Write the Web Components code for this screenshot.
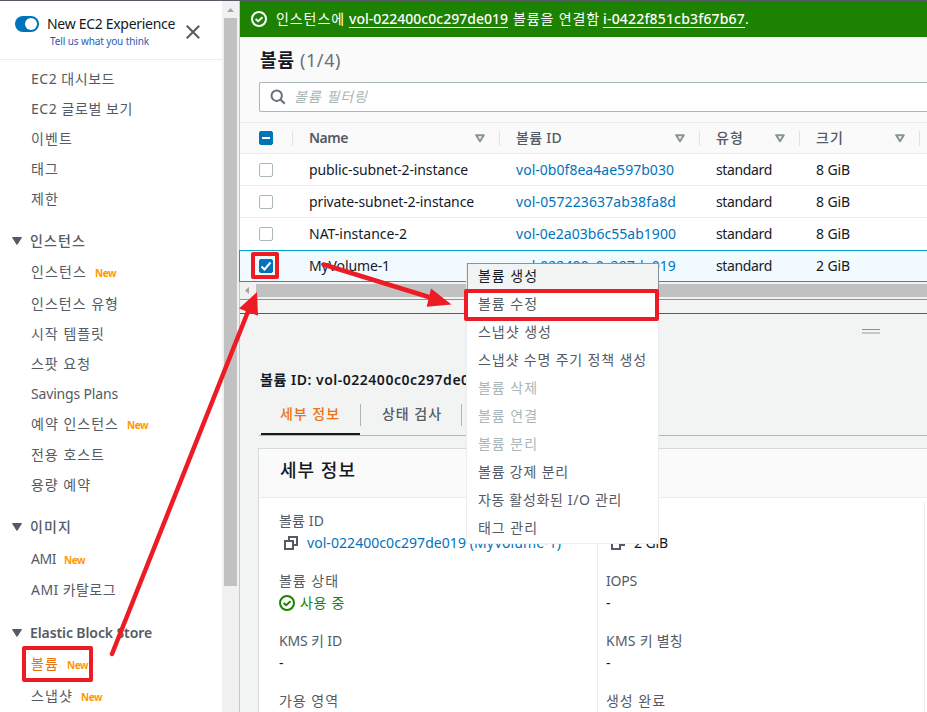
<!DOCTYPE html>
<html lang="ko">
<head>
<meta charset="utf-8">
<title>볼륨 | EC2 Management Console</title>
<style>
	html, body { margin: 0; height: 100%; overflow: hidden; }
	body {
		font: 14px/20px "Noto Sans", "Noto Sans CJK KR", sans-serif;
		color: #16191f;
		background: #f2f3f3;
	}
</style>
</head>
<body>
<ec2-console></ec2-console>
<script>
class BaseElement extends HTMLElement {
	constructor() {
		super();
		this.attachShadow({ mode: "open" });
	}
	connectedCallback() {
		this.shadowRoot.innerHTML = this.render();
	}
	attr(name, fallback = "") {
		return this.getAttribute(name) || fallback;
	}
}

// fit-text: one line of text, tracked to the width in "w"
class FitText extends BaseElement {
	render() {
		return `<style>:host { display: block; white-space: nowrap; flex: none; } span { display: inline-block; height: 20px; line-height: 20px; vertical-align: top; }</style><span><slot></slot></span>`;
	}
	connectedCallback() {
		super.connectedCallback();
		const w = Number(this.getAttribute("w"));
		if (!w) return;
		const span = this.shadowRoot.querySelector("span");
		const natural = span.getBoundingClientRect().width;
		span.style.letterSpacing = (w - natural) / this.textContent.length + "px";
	}
}
customElements.define("fit-text", FitText);

const ICONS = {
	check: `<svg width="16" height="16" viewBox="0 0 16 16" fill="none" stroke="currentColor" stroke-width="2"><circle cx="8" cy="8" r="7"/><path d="M4.6 8l2.5 2.2 4.4-4"/></svg>`,
	close: `<svg width="14" height="14" viewBox="0 0 14 14" fill="none" stroke="currentColor" stroke-width="2"><path d="M.8.8l12.4 12.4M13.2.8L.8 13.2"/></svg>`,
	search: `<svg width="16" height="16" viewBox="0 0 16 16" fill="none" stroke="currentColor" stroke-width="2"><circle cx="6.7" cy="6.7" r="5.2"/><path d="M10.5 10.5l4.2 4.2"/></svg>`,
	filter: `<svg width="10" height="9" viewBox="0 0 10 9" fill="none" stroke="currentColor" stroke-width="2" stroke-linejoin="round"><path d="M1.2 1.2h7.6L5 7.3z"/></svg>`,
	caret: `<svg width="10" height="8" viewBox="0 0 10 8" fill="currentColor" stroke="currentColor" stroke-linejoin="round"><path d="M.5.5h9L5 7.5z"/></svg>`,
	copy: `<svg width="14" height="14" viewBox="0 0 14 14" fill="none" stroke="currentColor" stroke-width="2"><path d="M1 5h8v8H1zM5 4V1h8v8H10"/></svg>`
};
class UiIcon extends BaseElement {
	render() {
		return `<style>:host { display: inline-flex; flex: none; } svg { display: block; }</style>${ICONS[this.attr("name")]}`;
	}
}
customElements.define("ui-icon", UiIcon);

class CheckBox extends BaseElement {
	render() {
		const state = this.attr("state");
		const mark = {
			mixed: `<path d="M2 6h8"/>`,
			on: `<path d="M1.500 6.500l3 3L10.500 2.500"/>`
		}[state] || "";
		return `
			<style>
				:host { display: flex; width: 14px; height: 14px; flex: none; }
				div {
					box-sizing: border-box; width: 14px; height: 14px;
					border: 1px solid ${mark ? "#0073bb" : "#aab7b8"};
					border-radius: 2px; background: ${mark ? "#0073bb" : "#fff"};
				}
				svg { display: block; }
			</style>
			<div><svg width="12" height="12" fill="none" stroke="#fff" stroke-width="2">${mark}</svg></div>
		`;
	}
}
customElements.define("check-box", CheckBox);

class NavItem extends BaseElement {
	render() {
		return `
			<style>
				:host {
					display: flex; align-items: center; height: 30px; padding-left: 31px;
					margin-top: ${this.attr("gap", "0")}px; color: #545b64;
				}
				:host([active]) { color: #ec7211; }
				.new { margin-left: 8px; padding-top: 2px; font-size: 10px; font-weight: 700; color: #ff9900; }
			</style>
			<fit-text w="${this.attr("w")}">${this.attr("label")}</fit-text>
			${this.hasAttribute("new") ? `<fit-text class="new" w="21">New</fit-text>` : ""}
		`;
	}
}
customElements.define("nav-item", NavItem);

class NavHeading extends BaseElement {
	render() {
		return `
			<style>
				:host {
					display: flex; align-items: center; height: 30px; padding-left: 12px; gap: 8px;
					margin-top: ${this.attr("gap", "0")}px; color: #545b64; font-weight: 500;
				}
				:host([latin]) { font-weight: 600; }
			</style>
			<ui-icon name="caret"></ui-icon>
			<fit-text w="${this.attr("w")}">${this.attr("label")}</fit-text>
		`;
	}
}
customElements.define("nav-heading", NavHeading);

class SideNav extends BaseElement {
	render() {
		return `
			<style>
				:host { display: flex; width: 240px; flex: none; background: #fff; overflow: hidden; }
				.panel { width: 222px; flex: none; }
				header {
					box-sizing: border-box; display: flex; height: 59px; padding: 13px 0 0 15px;
					border-bottom: 1px solid #eaeded;
				}
				.toggle {
					box-sizing: border-box; width: 24px; height: 16px; margin-top: 2px; padding: 2px; flex: none;
					border-radius: 8px; background: #0073bb; display: flex; justify-content: flex-end;
				}
				.toggle i { width: 12px; height: 12px; border-radius: 50%; background: #fff; }
				.titles { display: flex; flex-direction: column; margin-left: 8px; }
				.titles .sub { margin: -3px 0 0 3px; font-size: 10px; color: #2a5bb8; }
				header ui-icon { margin: 11px 0 0 11px; color: #545b64; }
				nav { padding-top: 4px; }
				.bar { box-sizing: border-box; flex: none; width: 16px; padding: 0 1px 0 2px; background: #f1f1f1; }
				.bar svg { display: block; }
				.bar i { display: block; width: 13px; height: 568px; background: #c1c1c1; }
				.edge { width: 1px; flex: none; border-right: 1px solid #c6c9c9; background: #f1f1f1; }
			</style>
			<div class="panel">
				<header>
					<div class="toggle"><i></i></div>
					<div class="titles">
						<fit-text w="128">New EC2 Experience</fit-text>
						<fit-text class="sub" w="99">Tell us what you think</fit-text>
					</div>
					<ui-icon name="close"></ui-icon>
				</header>
				<nav>
					<nav-item label="EC2 대시보드" w="84"></nav-item>
					<nav-item label="EC2 글로벌 보기" w="102"></nav-item>
					<nav-item label="이벤트" w="42"></nav-item>
					<nav-item label="태그" w="28"></nav-item>
					<nav-item label="제한" w="28"></nav-item>
					<nav-heading label="인스턴스" w="56" gap="12"></nav-heading>
					<nav-item label="인스턴스" w="56" gap="1" new></nav-item>
					<nav-item label="인스턴스 유형" w="88" gap="2"></nav-item>
					<nav-item label="시작 템플릿" w="74"></nav-item>
					<nav-item label="스팟 요청" w="60"></nav-item>
					<nav-item label="Savings Plans" w="87"></nav-item>
					<nav-item label="예약 인스턴스" w="88" new></nav-item>
					<nav-item label="전용 호스트" w="74" gap="1"></nav-item>
					<nav-item label="용량 예약" w="60"></nav-item>
					<nav-heading label="이미지" w="42" gap="12"></nav-heading>
					<nav-item label="AMI" w="25" gap="2" new></nav-item>
					<nav-item label="AMI 카탈로그" w="85" gap="1"></nav-item>
					<nav-heading label="Elastic Block Store" w="122" gap="13" latin></nav-heading>
					<nav-item label="볼륨" w="28" gap="1" active new></nav-item>
					<nav-item label="스냅샷" w="42" gap="2" new></nav-item>
				</nav>
			</div>
			<div class="bar">
				<svg width="13" height="17"><path d="M3 11l3.500-4 3.500 4z" fill="#a3a3a3"/></svg>
				<i></i>
			</div>
			<div class="edge"></div>
		`;
	}
}
customElements.define("side-nav", SideNav);

class FlashBar extends BaseElement {
	render() {
		return `
			<style>
				:host {
					display: flex; align-items: center; height: 36px; padding-left: 11px;
					color: #fff; background: #1d8102;
				}
				ui-icon { margin-right: 9px; }
				a { display: flex; height: 18px; box-sizing: border-box; border-bottom: 1px solid #fff; margin: 0 5px 0 4px; font-weight: 500; }
				a.last { margin: 0 0 0 3px; }
				a fit-text { margin-top: -1px; }
			</style>
			<ui-icon name="check"></ui-icon>
			<fit-text w="69">인스턴스에</fit-text>
			<a><fit-text w="159">vol-022400c0c297de019</fit-text></a>
			<fit-text w="87">볼륨을 연결함</fit-text>
			<a class="last"><fit-text w="142">i-0422f851cb3f67b67</fit-text></a>
			<fit-text>.</fit-text>
		`;
	}
}
customElements.define("flash-bar", FlashBar);

const GRID = "52px 207px 200px 100px 120px 1fr";

class TableHead extends BaseElement {
	render() {
		const cell = (label, w) => `<div class="cell"><fit-text w="${w}">${label}</fit-text><ui-icon name="filter"></ui-icon></div>`;
		return `
			<style>
				:host {
					box-sizing: border-box; display: grid; grid-template-columns: ${GRID}; align-items: center;
					height: 32px; border: solid #eaeded; border-width: 1px 0; color: #545b64; font-weight: 500;
				}
				div { box-sizing: border-box; height: 15px; display: flex; align-items: center; border-right: 1px solid #dfe3e3; }
				.pick { padding-left: 19px; width: 53px; }
				.cell { justify-content: space-between; padding: 0 14px 0 17px; width: calc(100% + 1px); }
				.cell:nth-child(3) { font-weight: 600; }
				.end { border: 0; }
				ui-icon { color: #879596; }
			</style>
			<div class="pick"><check-box state="mixed"></check-box></div>
			${cell("Name", 39)}${cell("볼륨 ID", 46)}${cell("유형", 28)}${cell("크기", 28)}
			<div class="end"></div>
		`;
	}
}
customElements.define("table-head", TableHead);

class VolumeRow extends BaseElement {
	render() {
		const [nw, vw] = this.attr("widths").split(",");
		return `
			<style>
				:host {
					box-sizing: border-box; display: grid; grid-template-columns: ${GRID}; align-items: center;
					height: 32px; border-bottom: 1px solid #eaeded; background: #fff;
				}
				:host([selected]) { border: 1px solid #00a1c9; border-right: 0; background: #f1faff; margin-left: -1px; }
				check-box { margin-left: 19px; }
				fit-text { margin-left: 17px; }
				.id { color: #0073bb; }
			</style>
			<check-box state="${this.hasAttribute("selected") ? "on" : ""}"></check-box>
			<fit-text w="${nw}">${this.attr("name")}</fit-text>
			<fit-text class="id" w="${vw}">${this.attr("volume")}</fit-text>
			<fit-text w="56">standard</fit-text>
			<fit-text w="34">${this.attr("size")}</fit-text>
		`;
	}
}
customElements.define("volume-row", VolumeRow);

class VolumeTable extends BaseElement {
	render() {
		return `
			<style>
				:host { display: block; flex: none; background: #fafafa; }
				h1 { display: flex; box-sizing: border-box; margin: 0; padding: 13px 0 0 20px; height: 45px; gap: 5px; font-size: 18px; }
				h1 .count { font-weight: 400; color: #687078; }
				.filter {
					box-sizing: border-box; display: flex; align-items: center; height: 30px; margin: 0 0 10px 19px;
					border: 1px solid #aab7b8; border-right: 0; border-radius: 2px 0 0 2px; background: #fff;
					padding-left: 10px; gap: 8px; color: #687078;
				}
				.filter fit-text { color: #aab7b8; font-style: italic; }
				volume-row:nth-of-type(3) { border-color: #fff; }
				.scroll { display: flex; box-sizing: border-box; height: 17px; padding-top: 2px; background: #f1f1f1; }
				.scroll i { flex: 1; height: 13px; background: #c1c1c1; }
			</style>
			<h1><fit-text w="35">볼륨</fit-text><fit-text class="count" w="41">(1/4)</fit-text></h1>
			<div class="filter"><ui-icon name="search"></ui-icon><fit-text w="74">볼륨 필터링</fit-text></div>
			<table-head></table-head>
			<volume-row name="public-subnet-2-instance" volume="vol-0b0f8ea4ae597b030" size="8 GiB" widths="159,158"></volume-row>
			<volume-row name="private-subnet-2-instance" volume="vol-057223637ab38fa8d" size="8 GiB" widths="165,160"></volume-row>
			<volume-row name="NAT-instance-2" volume="vol-0e2a03b6c55ab1900" size="8 GiB" widths="98,160"></volume-row>
			<volume-row name="MyVolume-1" volume="vol-022400c0c297de019" size="2 GiB" widths="81,160" selected></volume-row>
			<div class="scroll">
				<svg width="16" height="13"><path d="M9 3v7L5 6.500z" fill="#a3a3a3"/></svg>
				<i></i>
			</div>
		`;
	}
}
customElements.define("volume-table", VolumeTable);

class DetailField extends BaseElement {
	render() {
		return `
			<style>
				:host { display: flex; flex-direction: column; height: 60px; }
				.label { color: #545b64; }
				.value { display: flex; align-items: center; height: 24px; }
			</style>
			<fit-text class="label" w="${this.attr("w")}">${this.attr("label")}</fit-text>
			<div class="value"><slot></slot></div>
		`;
	}
}
customElements.define("detail-field", DetailField);

class DetailPanel extends BaseElement {
	render() {
		return `
			<style>
				:host { display: block; flex: 1; min-height: 0; background: #f2f3f3; }
				.split { height: 13px; border: solid; border-width: 1px 0; border-color: #879596 transparent #545b64; }
				.grip { width: 18px; height: 2px; margin: 15px 0 0 622px; border: solid; border-width: 1px 0 2px; border-color: #879596 transparent #c4c8c8; }
				h2 { margin: 36px 0 0 20px; font-size: 14px; line-height: 20px; font-weight: 600; height: 20px; }
				.tabs { display: flex; height: 46px; box-sizing: border-box; margin-left: 19px; padding-left: 2px; border-bottom: 1px solid #aab7b8; color: #545b64; font-weight: 500; }
				.tabs div { box-sizing: border-box; width: 102px; padding: 14px 0 0 22px; position: relative; }
				.tabs div::after { content: ""; position: absolute; right: 0; top: 14px; height: 22px; border-right: 1px solid #aab7b8; }
				.tabs .on { width: 99px; padding-left: 19px; color: #ec7211; border-bottom: 2px solid #16191f; }
				.tabs .on::after { right: -1px; }
				.card { margin: 12px 0 0 18px; border: solid #d5dbdb; border-width: 1px 0 0 1px; background: #fff; }
				.card h3 { box-sizing: border-box; margin: 0; padding: 11px 0 0 21px; height: 49px; background: #fafafa; border-bottom: 1px solid #eaeded; font-size: 18px; font-weight: 500; }
				.columns { display: grid; grid-template-columns: 339px 327px 1fr; padding-top: 4px; }
				.columns > div { border-right: 1px solid #eaeded; padding: 9px 0 0 20px; height: 240px; }
				.columns > .mid { padding-left: 8px; }
				.columns > .last { border: 0; }
				.copy { margin: 0 9px 0 5px; color: #545b64; }
				.link { color: #0073bb; }
				.ok { color: #1d8102; display: flex; align-items: center; gap: 5px; }
			</style>
			<div class="split"></div>
			<div class="grip"></div>
			<h2><fit-text w="331">볼륨 ID: vol-022400c0c297de019 (MyVolume-1)</fit-text></h2>
			<div class="tabs">
				<div class="on"><fit-text w="60">세부 정보</fit-text></div>
				<div><fit-text w="60">상태 검사</fit-text></div>
			</div>
			<div class="card">
				<h3><fit-text w="76">세부 정보</fit-text></h3>
				<div class="columns">
					<div>
						<detail-field label="볼륨 ID" w="45"><ui-icon class="copy" name="copy"></ui-icon><fit-text class="link" w="254">vol-022400c0c297de019 (MyVolume-1)</fit-text></detail-field>
						<detail-field label="볼륨 상태" w="60"><span class="ok"><ui-icon name="check"></ui-icon><fit-text w="45">사용 중</fit-text></span></detail-field>
						<detail-field label="KMS 키 ID" w="63">-</detail-field>
						<detail-field label="가용 영역" w="60"></detail-field>
					</div>
					<div class="mid">
						<detail-field label="크기" w="28"><ui-icon class="copy" name="copy"></ui-icon><fit-text w="34">2 GiB</fit-text></detail-field>
						<detail-field label="IOPS" w="31">-</detail-field>
						<detail-field label="KMS 키 별칭" w="77">-</detail-field>
						<detail-field label="생성 완료" w="60"></detail-field>
					</div>
					<div class="last"></div>
				</div>
			</div>
		`;
	}
}
customElements.define("detail-panel", DetailPanel);

class ContextMenu extends BaseElement {
	render() {
		return `
			<style>
				:host {
					position: absolute; left: 466px; top: 263px; box-sizing: border-box; width: 193px; height: 281px;
					background: #fff; border: 1px solid #eaeded; border-top: 0; color: #545b64;
				}
				div { box-sizing: border-box; height: 28px; padding: 3px 0 0 11px; }
				.hover { margin-right: -1px; padding: 2px 0 0 10px; border: 1px solid #879596; background: #f2f3f3; color: #16191f; }
				.off { color: #aab7b8; }
			</style>
			<div class="hover"><fit-text w="60">볼륨 생성</fit-text></div>
			<div><fit-text w="60">볼륨 수정</fit-text></div>
			<div><fit-text w="74">스냅샷 생성</fit-text></div>
			<div><fit-text w="169">스냅샷 수명 주기 정책 생성</fit-text></div>
			<div class="off"><fit-text w="60">볼륨 삭제</fit-text></div>
			<div class="off"><fit-text w="60">볼륨 연결</fit-text></div>
			<div class="off"><fit-text w="60">볼륨 분리</fit-text></div>
			<div><fit-text w="91">볼륨 강제 분리</fit-text></div>
			<div><fit-text w="144">자동 활성화된 I/O 관리</fit-text></div>
			<div><fit-text w="60">태그 관리</fit-text></div>
		`;
	}
}
customElements.define("context-menu", ContextMenu);

// red boxes and arrows that walk through the steps
class StepMarks extends BaseElement {
	render() {
		return `
			<style>:host { position: absolute; inset: 0; pointer-events: none; } svg { display: block; }</style>
			<svg width="927" height="712" fill="none" stroke="#ed1c24" stroke-width="4" stroke-linejoin="round">
				<rect x="24" y="648" width="67" height="32"/>
				<rect x="253" y="254" width="24" height="23"/>
				<rect x="466" y="291" width="191" height="28"/>
				<path d="M112 654L249 309M323.500 264.500L432 298" stroke-width="4.500" stroke-linecap="round"/>
				<path d="M257 292L239 308.500L258 315.800zM451.500 304.500L431 288.500L426.700 306.700z" fill="#ed1c24" stroke="none"/>
			</svg>
		`;
	}
}
customElements.define("step-marks", StepMarks);

class Ec2Console extends BaseElement {
	render() {
		return `
			<style>
				:host { box-sizing: border-box; display: flex; width: 927px; height: 712px; border-top: 1px solid #545b64; overflow: hidden; position: relative; }
				main { flex: 1; min-width: 0; display: flex; flex-direction: column; }
				context-menu { margin-top: -1px; }
				step-marks { top: -1px; }
			</style>
			<side-nav></side-nav>
			<main>
				<flash-bar></flash-bar>
				<volume-table></volume-table>
				<detail-panel></detail-panel>
			</main>
			<context-menu></context-menu>
			<step-marks></step-marks>
		`;
	}
}
customElements.define("ec2-console", Ec2Console);
</script>
</body>
</html>
